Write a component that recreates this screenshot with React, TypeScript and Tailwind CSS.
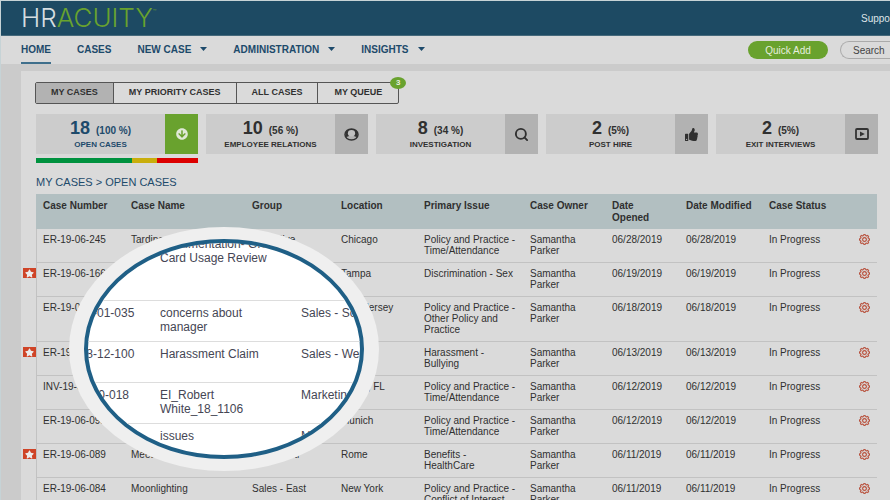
import type { ReactNode } from "react";
import clsx from "clsx";
import { Search } from "lucide-react";
import { BsGear } from "react-icons/bs";
import { FaArrowCircleDown, FaStar, FaThumbsUp } from "react-icons/fa";

type CaseRow = {
  id: string;
  name: string;
  group: string;
  location: string;
  issue: string;
  opened: string;
  flagged?: boolean;
};

const navItems = [
  { label: "HOME", active: true },
  { label: "CASES" },
  { label: "NEW CASE", menu: true },
  { label: "ADMINISTRATION", menu: true },
  { label: "INSIGHTS", menu: true },
];

const columns = [
  { label: "Case Number", width: "w-[88px]" },
  { label: "Case Name", width: "w-[121px]" },
  { label: "Group", width: "w-[89px]" },
  { label: "Location", width: "w-[83px]" },
  { label: "Primary Issue", width: "w-[106px]" },
  { label: "Case Owner", width: "w-[82px]" },
  { label: "Date\nOpened", width: "w-[74px]" },
  { label: "Date Modified", width: "w-[83px]" },
  { label: "Case Status", width: "w-[91px]" },
];

const cases: CaseRow[] = [
  { id: "ER-19-06-245", name: "Tardiness", group: "Executive", location: "Chicago", issue: "Policy and Practice -\nTime/Attendance", opened: "06/28/2019" },
  { id: "ER-19-06-166", name: "", group: "", location: "Tampa", issue: "Discrimination - Sex", opened: "06/19/2019", flagged: true },
  { id: "ER-19-06", name: "", group: "", location: "New Jersey", issue: "Policy and Practice -\nOther Policy and\nPractice", opened: "06/18/2019" },
  { id: "ER-19", name: "", group: "", location: "", issue: "Harassment -\nBullying", opened: "06/13/2019", flagged: true },
  { id: "INV-19-06", name: "", group: "", location: "Miami, FL", issue: "Policy and Practice -\nTime/Attendance", opened: "06/12/2019" },
  { id: "ER-19-06-095", name: "", group: "", location: "Munich", issue: "Policy and Practice -\nTime/Attendance", opened: "06/12/2019" },
  { id: "ER-19-06-089", name: "Meeting", group: "Sales - Intl", location: "Rome", issue: "Benefits -\nHealthCare", opened: "06/11/2019", flagged: true },
  { id: "ER-19-06-084", name: "Moonlighting", group: "Sales - East", location: "New York", issue: "Policy and Practice -\nConflict of Interest", opened: "06/11/2019" },
];

const lensRows = [
  { id: "", name: "Documentation- Group\nCard Usage Review", group: "", tall: true },
  { id: "ER-19-01-035", name: "concerns about\nmanager", group: "Sales - South" },
  { id: "ER-18-12-100", name: "Harassment Claim", group: "Sales - West" },
  { id: "EI-18-10-018", name: "EI_Robert\nWhite_18_1106", group: "Marketing" },
  { id: "", name: "issues", group: "Marketing" },
];

const UserIcon = () => (
  <svg width="15" height="13" viewBox="0 0 15 13">
    <ellipse cx="7.5" cy="6.5" rx="6.5" ry="5.6" fill="none" stroke="#333" strokeWidth="1.5" />
    <path d="M1.500 6C1.500 2.500 4 1 7.500 1s6 1.500 6 5l-.8 3.200c-1-.7-2-.8-3-1.200H5.300c-1 .4-2 .5-3 1.200z" fill="#333" />
    <ellipse cx="7.500" cy="5.300" rx="3.600" ry="3.200" fill="#c0c0c0" />
  </svg>
);

const PlayIcon = () => (
  <svg width="14" height="12" viewBox="0 0 14 12">
    <rect x="1" y="1" width="12" height="10" rx="1" fill="none" stroke="#333" strokeWidth="1.8" />
    <path d="M5 3.400L9.800 6 5 8.600z" fill="#333" />
  </svg>
);

const StatCard = ({
  count,
  percent,
  label,
  icon,
  active,
}: {
  count: number;
  percent: string;
  label: string;
  icon: ReactNode;
  active?: boolean;
}) => (
  <div className="flex-1">
    <button className={clsx("flex w-full h-10 bg-[#cccccc]", active ? "text-[#1d4a6b]" : "text-[#303030]")}>
      <span className="flex flex-1 flex-col items-center pt-[5px] font-bold">
        <span className="flex items-baseline gap-1.5 leading-[18px]">
          <span className="text-[18px]">{count}</span>
          <span className="text-[10px]">{percent}</span>
        </span>
        <span className="text-[8px] leading-[10px]">{label}</span>
      </span>
      <span
        className={clsx(
          "flex w-[33px] h-full items-center justify-center",
          active ? "bg-[#69a22e] text-[#dfe8d6]" : "bg-[#b2b2b2]"
        )}
      >
        {icon}
      </span>
    </button>
    {active && (
      <div className="flex h-[5px] mt-1">
        <div className="w-[59%] bg-[#00923f]" />
        <div className="w-[16%] bg-[#c9ae0c]" />
        <div className="flex-1 bg-[#dc0000]" />
      </div>
    )}
  </div>
);

const Lens = () => (
  <div className="absolute left-[68px] top-[226px] w-[310px] h-[244px] px-[15px] py-3 rounded-[50%] bg-[#efefef]">
    <div className="flex flex-col items-center justify-center w-full h-full pb-0.5 overflow-hidden rounded-[50%] border-4 border-[#1f5f86] bg-white text-[12px] leading-[14px] text-[#454654]">
      {lensRows.map((row, i) => (
        <div
          key={i}
          className={clsx(
            "flex shrink-0 w-[330px] pt-[5px] border-b border-[#dddddd] whitespace-pre",
            row.tall ? "h-[69px]" : "h-[41px]"
          )}
        >
          <span className="w-[101px]">{row.id}</span>
          <span className="w-[141px]">{row.name}</span>
          <span>{row.group}</span>
        </div>
      ))}
    </div>
  </div>
);

export default function App() {
  return (
    <div className="relative h-screen overflow-hidden border-t border-l border-[#c6d3d6] bg-[#cbcbcb] text-[10px] text-[#303030] font-['Liberation_Sans',Arial,sans-serif]">
      <header className="flex items-center h-[35px] pl-5 bg-[#1d4a63] border-b border-[#45697b]">
        <a href="#" className="flex items-start font-['Inter',sans-serif] text-[26px] leading-6 font-light">
          <span className="text-[#d5dde0]">HR</span>
          <span className="text-[#69a22e]">ACUITY</span>
          <span className="text-[6px] leading-3 text-[#69a22e]">™</span>
        </a>
        <a href="#" className="ml-auto w-[29px] overflow-hidden whitespace-nowrap text-[#dfe5e8]">
          Support
        </a>
      </header>

      <nav className="flex items-center h-7 pl-5 bg-[#dadada]">
        <div className="flex h-full gap-[26px] font-bold text-[#1d4a6b]">
          {navItems.map((item) => (
            <button
              key={item.label}
              className={clsx(
                "flex items-center gap-[9px] h-full border-b-2",
                item.active ? "border-[#3f6f8c]" : "border-transparent"
              )}
            >
              {item.label}
              {item.menu && (
                <svg width="7" height="4" viewBox="0 0 7 4">
                  <path d="M0 0h7L3.500 4z" fill="currentColor" />
                </svg>
              )}
            </button>
          ))}
        </div>
        <button className="ml-auto w-20 h-[18px] rounded-full bg-[#69a22e] text-[#e6eedf]">Quick Add</button>
        <input
          aria-label="Search"
          placeholder="Search"
          className="ml-3 w-[50px] h-[18px] pl-3 rounded-l-full border border-r-0 border-[#aaaaaa] placeholder:text-[#444444]"
        />
      </nav>

      <main className="mt-[7px] ml-5 pt-[11px] pr-3 bg-[#dadada]">
        <div className="flex pl-3.5">
          <div className="flex h-[22px] rounded-xs border border-[#555555] divide-x divide-[#555555] text-[9px] font-bold">
            <button className="px-[15px] bg-[#b2b2b2]">MY CASES</button>
            <button className="px-[15px]">MY PRIORITY CASES</button>
            <button className="px-[15px]">ALL CASES</button>
            <button className="relative px-4">
              MY QUEUE
              <span className="absolute -right-2 -top-1.5 flex items-center justify-center w-4 h-3 rounded-[50%] bg-[#69a22e] text-[8px] text-[#e6eedf]">
                3
              </span>
            </button>
          </div>
        </div>

        <section className="flex items-start gap-2 mt-2.5 h-[49px] pl-[15px]">
          <StatCard active count={18} percent="(100 %)" label="OPEN CASES" icon={<FaArrowCircleDown size={12} />} />
          <StatCard count={10} percent="(56 %)" label="EMPLOYEE RELATIONS" icon={<UserIcon />} />
          <StatCard count={8} percent="(34 %)" label="INVESTIGATION" icon={<Search size={15} strokeWidth={3} />} />
          <StatCard count={2} percent="(5%)" label="POST HIRE" icon={<FaThumbsUp size={13} />} />
          <StatCard count={2} percent="(5%)" label="EXIT INTERVIEWS" icon={<PlayIcon />} />
        </section>

        <h1 className="mt-3 mb-1 pl-[15px] text-[11px] leading-[15px] text-[#1d4a6b]">MY CASES &gt; OPEN CASES</h1>

        <div className="pl-0.5 pr-px">
          <table className="w-full table-fixed border-separate border-spacing-0">
            <thead>
              <tr className="h-[35px] text-left align-top leading-3">
                <th className="w-[13px]" aria-label="Flag" />
                {columns.map((col) => (
                  <th key={col.label} className={clsx("pt-1.5 pl-[7px] pr-1 whitespace-pre-line bg-[#b2bfc1]", col.width)}>
                    {col.label}
                  </th>
                ))}
                <th className="w-6 bg-[#b2bfc1]" aria-label="Actions" />
              </tr>
            </thead>
            <tbody>
              {cases.map((row) => (
                <tr
                  key={row.id}
                  className="align-top leading-[11px] [&>td]:pt-[5px] [&>td]:pb-1.5 [&>td+td]:border-b [&>td+td]:border-[#c2c2c2] [&>td+td]:pl-[7px] [&>td+td]:pr-1"
                >
                  <td>
                    {row.flagged && (
                      <span className="flex items-center justify-center h-[10px] bg-[#cf4427] text-[#ececec]">
                        <FaStar size={9} />
                      </span>
                    )}
                  </td>
                  <td className="border-l border-l-[#cccccc] pl-1.5! whitespace-nowrap">{row.id}</td>
                  <td>{row.name}</td>
                  <td>{row.group}</td>
                  <td className="whitespace-nowrap">{row.location}</td>
                  <td className="whitespace-pre-line">{row.issue}</td>
                  <td className="whitespace-pre-line">{"Samantha\nParker"}</td>
                  <td>{row.opened}</td>
                  <td>{row.opened}</td>
                  <td>In Progress</td>
                  <td className="pl-1.5!">
                    <button aria-label="Case settings" className="text-[#b5402a]">
                      <BsGear size={11} strokeWidth={0.5} />
                    </button>
                  </td>
                </tr>
              ))}
            </tbody>
          </table>
        </div>
      </main>

      <Lens />
    </div>
  );
}
